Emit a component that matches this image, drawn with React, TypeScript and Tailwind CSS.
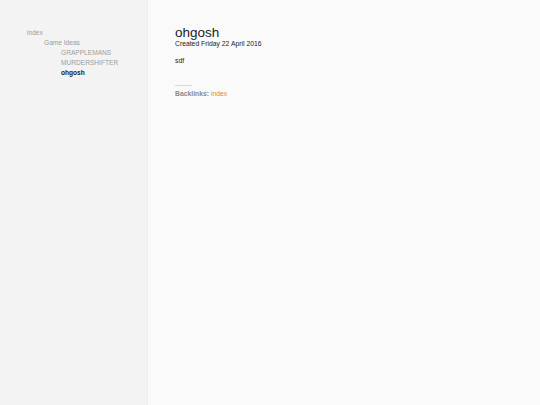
import React from "react";

const Tree = () => (
  <ul className="text-[6.6px] leading-[10px] text-[#9c9c9c]">
    <li className="pl-[27px]">index</li>
    <li className="pl-[44px]">Game Ideas</li>
    <li className="pl-[61px]">GRAPPLEMANS</li>
    <li className="pl-[61px]">MURDERSHIFTER</li>
    <li className="pl-[61px] font-bold text-[#1a1a1a]">ohgosh</li>
  </ul>
);

export default function App() {
  return (
    <div
      className="flex h-[405px] w-[540px] bg-[#fafafa]"
      style={{ fontFamily: '"Liberation Sans", Arial, sans-serif' }}
    >
      <aside className="w-[148px] shrink-0 border-r border-[#ededed] bg-[#f3f3f3] pt-[28px]">
        <Tree />
      </aside>
      <main className="pl-[27px] pt-[27px] text-[#1a1a1a]">
        <h1 className="text-[13.5px] leading-[12px]">ohgosh</h1>
        <div className="text-[6.8px] leading-[9px]">Created Friday 22 April 2016</div>
        <p className="mt-[8px] text-[6.8px] leading-[9px]">sdf</p>
        <hr className="mt-[20px] w-[17px] border-t border-[#d9d9d9]" />
        <div className="mt-[3px] text-[6.8px] leading-[9px]">
          <span className="font-bold text-[#8a8a8a]">Backlinks: </span>
          <span className="text-[#e0883a]">index</span>
        </div>
      </main>
    </div>
  );
}
